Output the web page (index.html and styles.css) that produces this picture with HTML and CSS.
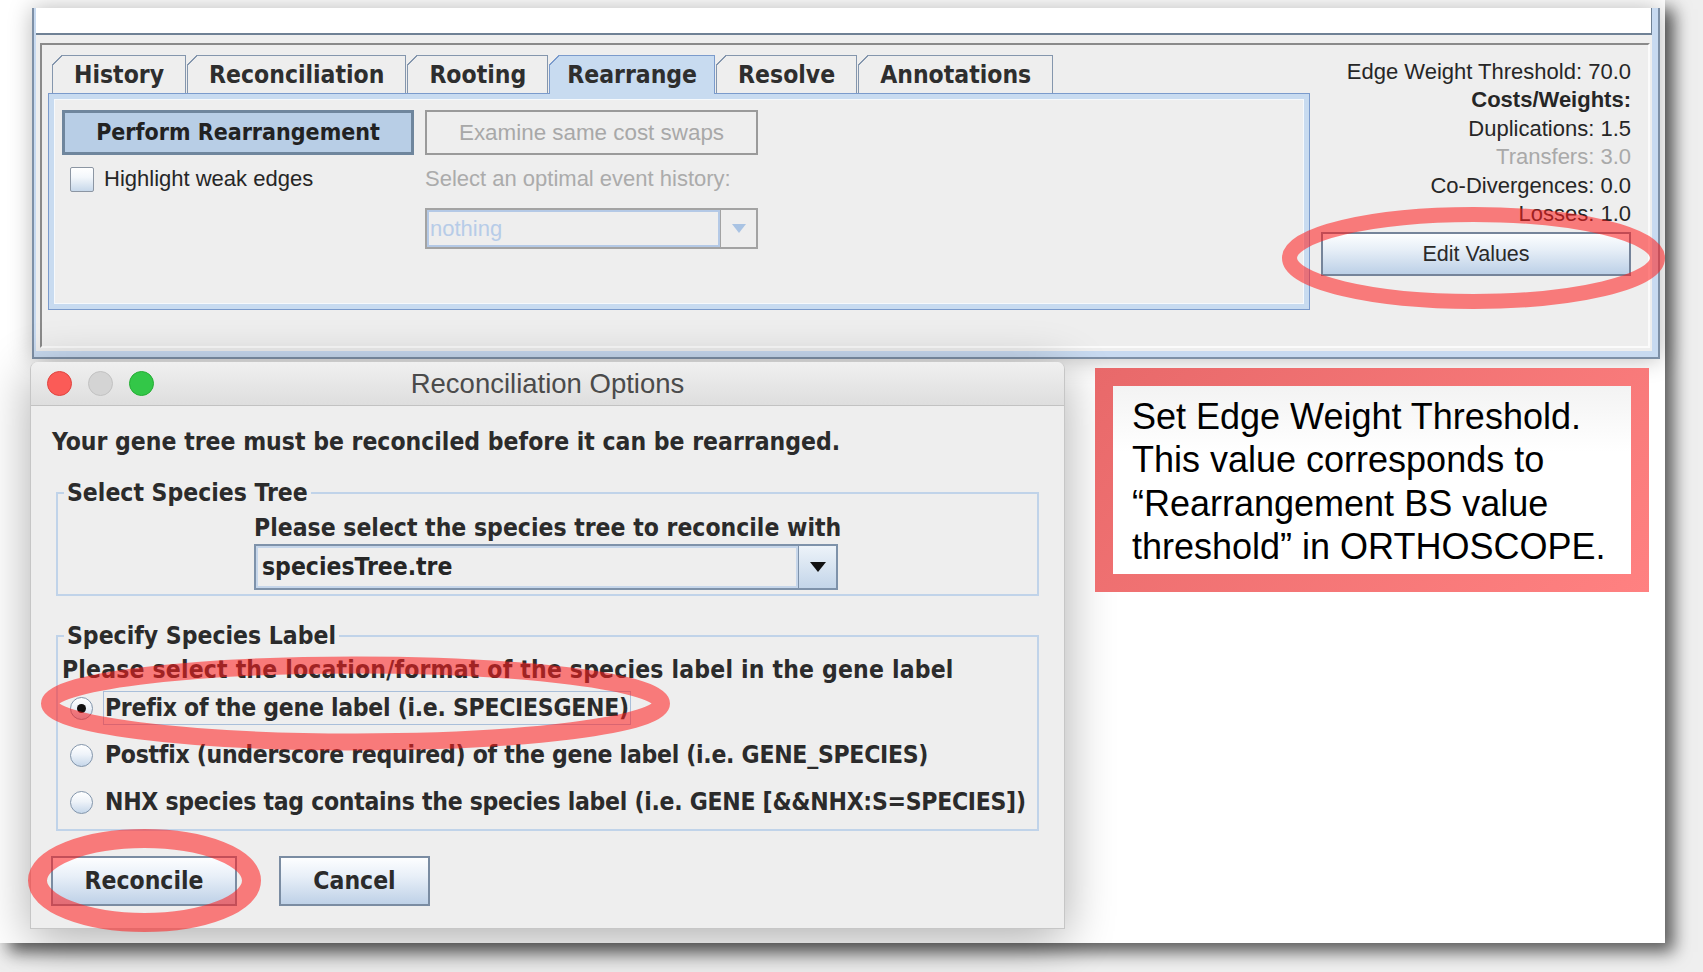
FILE: index.html
```html
<!DOCTYPE html>
<html lang="en">
<head>
<meta charset="utf-8">
<title>Reconciliation Options</title>
<link rel="stylesheet" href="styles.css">
</head>
<body>
<div class="slide">
  <div class="window">
    <div class="win-inner">
      <div class="topstrip"></div>
      <div class="frame">
        <div class="tabbed">
          <div class="tabs">
            <div class="tab">History</div>
            <div class="tab">Reconciliation</div>
            <div class="tab">Rooting</div>
            <div class="tab active">Rearrange</div>
            <div class="tab">Resolve</div>
            <div class="tab">Annotations</div>
          </div>
          <div class="tab-body">
            <div class="rearr">
              <div class="rcol1">
                <div class="btn-primary">Perform Rearrangement</div>
                <div class="check"><span class="checkbox"></span><span>Highlight weak edges</span></div>
              </div>
              <div class="rcol2">
                <div class="btn-disabled">Examine same cost swaps</div>
                <div class="dim-label">Select an optimal event history:</div>
                <div class="combo-dis">
                  <span class="cd-text">nothing</span>
                  <span class="cd-arrow"><svg width="14" height="9" viewBox="0 0 14 9"><path d="M0 0H14L7 9Z" fill="#a9c3e3"/></svg></span>
                </div>
              </div>
            </div>
          </div>
        </div>
        <div class="info">
          <div class="info-line">Edge Weight Threshold: 70.0</div>
          <div class="info-line bold">Costs/Weights:</div>
          <div class="info-line">Duplications: 1.5</div>
          <div class="info-line muted">Transfers: 3.0</div>
          <div class="info-line">Co-Divergences: 0.0</div>
          <div class="info-line">Losses: 1.0</div>
          <div class="btn-edit">Edit Values</div>
        </div>
      </div>
    </div>
  </div>

  <div class="lower">
    <div class="dialog">
      <div class="titlebar">
        <div class="lights">
          <span class="light red"></span>
          <span class="light gray"></span>
          <span class="light green"></span>
        </div>
        <div class="title">Reconciliation Options</div>
        <div></div>
      </div>
      <div class="dlg-body">
        <div class="ui-bold intro">Your gene tree must be reconciled before it can be rearranged.</div>
        <fieldset class="group g1">
          <legend class="ui-bold">Select Species Tree</legend>
          <div class="ui-bold g1-label">Please select the species tree to reconcile with</div>
          <div class="combo">
            <span class="c-text ui-bold">speciesTree.tre</span>
            <span class="c-arrow"><svg width="16" height="10" viewBox="0 0 16 10"><path d="M0 0H16L8 10Z" fill="#111"/></svg></span>
          </div>
        </fieldset>
        <fieldset class="group g2">
          <legend class="ui-bold">Specify Species Label</legend>
          <div class="ui-bold g2-label">Please select the location/format of the species label in the gene label</div>
          <div class="radio-row first"><span class="radio on"></span><span class="ui-bold r-label focus">Prefix of the gene label (i.e. SPECIESGENE)</span></div>
          <div class="radio-row"><span class="radio"></span><span class="ui-bold r-label">Postfix (underscore required) of the gene label (i.e. GENE_SPECIES)</span></div>
          <div class="radio-row"><span class="radio"></span><span class="ui-bold r-label">NHX species tag contains the species label (i.e. GENE [&amp;&amp;NHX:S=SPECIES])</span></div>
        </fieldset>
        <div class="actions">
          <div class="btn-dlg reconcile ui-bold">Reconcile</div>
          <div class="btn-dlg cancel ui-bold">Cancel</div>
        </div>
      </div>
    </div>

    <div class="note">
      <div class="note-inner">Set Edge Weight Threshold.<br>This value corresponds to<br>“Rearrangement BS value<br>threshold” in ORTHOSCOPE.</div>
    </div>
  </div>

  <svg class="marks" width="1665" height="943" viewBox="0 0 1665 943">
    <g fill="none" stroke="rgb(255,30,30)" stroke-opacity="0.56">
      <ellipse cx="1473.5" cy="258" rx="184" ry="43.5" stroke-width="15"/>
      <ellipse cx="355.5" cy="703.5" rx="306" ry="38.5" stroke-width="17"/>
      <ellipse cx="144.5" cy="880.5" rx="107" ry="42" stroke-width="19"/>
    </g>
  </svg>
</div>
</body>
</html>
```

FILE: styles.css
```css
* { box-sizing: border-box; }

html, body {
  margin: 0;
  padding: 0;
}

body {
  width: 1703px;
  height: 972px;
  overflow: hidden;
  background: #efefef;
  font-family: "Liberation Sans", Arial, sans-serif;
}

.slide {
  position: relative;
  width: 1665px;
  height: 943px;
  padding-top: 8px;
  background: #fff;
  box-shadow: 9px 9px 16px rgba(0, 0, 0, 0.62);
}

.ui-bold {
  font-family: "DejaVu Sans Condensed", "DejaVu Sans", sans-serif;
  font-weight: bold;
  font-size: 24.5px;
  line-height: 26px;
  color: #2b2b2b;
}

/* ---------- main window ---------- */
.window {
  margin-left: 32px;
  width: 1628px;
  height: 351px;
  border: 2px solid #7e90a6;
  border-top: none;
  padding: 0 6px 6px 2px;
  background: #c8daf0;
  box-shadow: 0 0 22px rgba(0, 0, 0, 0.28);
}

.win-inner {
  height: 100%;
  background: #eeeeee;
  display: flex;
  flex-direction: column;
}

.topstrip {
  height: 27px;
  flex: none;
  background: #fff;
  border-bottom: 2px solid #6f8195;
  border-right: 1px solid #6f8195;
}

.frame {
  margin: 8px 2px 0 4px;
  height: 305px;
  border: 2px solid;
  border-color: #8a8a8a #fbfbfb #fbfbfb #8a8a8a;
  display: flex;
  padding: 10px 17px 0 6px;
}

.tabbed {
  width: 1262px;
  flex: none;
}

.tabs {
  display: flex;
  align-items: flex-start;
  gap: 1px;
  padding-left: 4px;
  height: 38px;
}

.tab {
  position: relative;
  height: 38px;
  padding: 0 21px;
  border: 1px solid #8496ad;
  border-bottom: none;
  background: #eeeeee;
  font-family: "DejaVu Sans Condensed", "DejaVu Sans", sans-serif;
  font-weight: bold;
  font-size: 24.5px;
  line-height: 37px;
  color: #2e2e2e;
  white-space: nowrap;
}

.tab::before {
  content: "";
  position: absolute;
  left: -1px;
  top: -1px;
  width: 11px;
  height: 11px;
  background: linear-gradient(135deg, #eeeeee calc(50% - 1px), #8496ad calc(50% - 1px), #8496ad calc(50% + 0.6px), transparent calc(50% + 0.6px));
}

.tab.active {
  background: #c8dbf0;
  border-color: #7b9bcc;
  height: 39px;
  margin-bottom: -1px;
  padding: 0 17px;
  z-index: 1;
}

.tab.active::before {
  background: linear-gradient(135deg, #eeeeee calc(50% - 1px), #7b9bcc calc(50% - 1px), #7b9bcc calc(50% + 0.6px), transparent calc(50% + 0.6px));
}

.tab-body {
  position: relative;
  height: 217px;
  border: 1px solid #7b9bcc;
  box-shadow: inset 0 0 0 5px #c8dbf0, inset 0 0 0 6px #f6f9fc;
  background: #eeeeee;
  padding: 16px 0 0 13px;
}

.rearr {
  display: flex;
  gap: 11px;
}

.rcol1 { width: 352px; }
.rcol2 { width: 333px; }

.btn-primary {
  height: 45px;
  border: 3px solid #6f869d;
  background: #b8cee6;
  text-align: center;
  font-family: "DejaVu Sans Condensed", "DejaVu Sans", sans-serif;
  font-weight: bold;
  font-size: 23px;
  line-height: 39px;
  color: #222;
  white-space: nowrap;
}

.btn-disabled {
  height: 45px;
  border: 2px solid #9a9a9a;
  background: #eeeeee;
  text-align: center;
  font-size: 22.4px;
  line-height: 41px;
  color: #a8a8a8;
}

.check {
  margin-top: 11px;
  display: flex;
  align-items: center;
  gap: 10px;
  padding-left: 8px;
  font-size: 22px;
  line-height: 26px;
  color: #262626;
}

.checkbox {
  width: 24px;
  height: 25px;
  flex: none;
  border: 1px solid #8c96a3;
  border-radius: 2px;
  background: linear-gradient(#ffffff, #f3f7fb 40%, #c7d8ea);
}

.dim-label {
  margin-top: 11px;
  font-size: 22px;
  line-height: 26px;
  color: #ababab;
  white-space: nowrap;
}

.combo-dis {
  margin-top: 16px;
  height: 41px;
  display: flex;
  border: 2px solid #a3a3a3;
}

.cd-text {
  flex: 1;
  border: 2px solid #b4c9e6;
  padding-left: 1px;
  font-size: 22px;
  line-height: 33px;
  color: #b7cce8;
}

.cd-arrow {
  width: 36px;
  border-left: 1px solid #a3a3a3;
  display: flex;
  align-items: center;
  justify-content: center;
}

.info {
  flex: 1;
  padding-top: 3px;
  text-align: right;
  font-size: 22px;
  line-height: 28.4px;
  color: #262626;
}

.info-line { white-space: nowrap; }
.info-line.bold { font-weight: bold; }
.info-line.muted { color: #a9a9a9; }

.btn-edit {
  margin: 4px 0 0 auto;
  width: 310px;
  height: 44px;
  border: 2px solid #75849a;
  background: linear-gradient(#fdfeff, #e6eef7 40%, #bcd0e7);
  text-align: center;
  font-size: 21.5px;
  line-height: 40px;
  color: #2a2a2a;
}

/* ---------- lower row ---------- */
.lower {
  display: flex;
  align-items: flex-start;
  margin-top: 3px;
}

.dialog {
  margin-left: 30px;
  width: 1035px;
  height: 567px;
  flex: none;
  background: #eeeeee;
  border: 1px solid #c6c6c6;
  border-top: none;
  border-radius: 7px 7px 0 0;
  box-shadow: 0 10px 50px rgba(0, 0, 0, 0.33);
  display: flex;
  flex-direction: column;
}

.titlebar {
  height: 44px;
  flex: none;
  display: grid;
  grid-template-columns: 1fr auto 1fr;
  align-items: center;
  border-bottom: 1px solid #c2c2c2;
  border-radius: 7px 7px 0 0;
  background: linear-gradient(#f0f0f0, #dedede);
}

.lights {
  display: flex;
  gap: 16px;
  padding-left: 16px;
}

.light {
  width: 25px;
  height: 25px;
  border-radius: 50%;
}

.light.red { background: #fb5b57; border: 1px solid #e0443f; }
.light.gray { background: #d4d4d4; border: 1px solid #c2c2c2; }
.light.green { background: #33c748; border: 1px solid #25ad34; }

.title {
  font-size: 27.5px;
  color: #4b4b4b;
  padding-top: 1px;
}

.dlg-body {
  padding-top: 23px;
}

.intro {
  margin-left: 21px;
  white-space: nowrap;
}

.group {
  margin: 25px 25px 0 25px;
  padding: 0 0 4px 0;
  border: 2px solid #c0d3e9;
  min-width: 0;
}

.group legend {
  margin-left: 6px;
  padding: 0 3px;
}

.g1-label {
  margin: 9px 0 0 196px;
  white-space: nowrap;
}

.combo {
  margin: 3px 0 0 196px;
  width: 584px;
  height: 46px;
  display: flex;
  border: 2px solid #7e92aa;
}

.c-text {
  flex: 1;
  border: 2px solid #c6d6ea;
  padding-left: 4px;
  line-height: 38px;
  color: #262626;
}

.c-arrow {
  width: 38px;
  border-left: 1px solid #7e92aa;
  background: linear-gradient(#edf3f9, #c3d5e9);
  display: flex;
  align-items: center;
  justify-content: center;
}

.g2 {
  margin-top: 27px;
  padding-bottom: 10px;
}

.g2-label {
  margin: 8px 0 0 4px;
  white-space: nowrap;
  letter-spacing: 0.18px;
}

.radio-row {
  height: 34px;
  margin-top: 13px;
  display: flex;
  align-items: center;
  padding-left: 12px;
  gap: 10px;
}

.radio-row.first { margin-top: 8px; }

.radio {
  width: 23px;
  height: 23px;
  flex: none;
  border-radius: 50%;
  border: 1px solid #8295ab;
  background: linear-gradient(#ffffff, #eef3f9 45%, #c6d7ea);
  display: flex;
  align-items: center;
  justify-content: center;
}

.radio.on::after {
  content: "";
  width: 9px;
  height: 9px;
  border-radius: 50%;
  background: #111;
}

.r-label {
  border: 1px solid transparent;
  padding: 3px 1px;
  white-space: nowrap;
  letter-spacing: -0.28px;
}

.r-label.focus {
  border-color: #a9bfda;
}

.actions {
  display: flex;
  gap: 42px;
  margin: 25px 0 0 20px;
}

.btn-dlg {
  height: 50px;
  border: 2px solid #7a8ca2;
  background: linear-gradient(#fdfeff, #e8eff8 40%, #bed1e7);
  text-align: center;
  line-height: 46px;
}

.btn-dlg.reconcile { width: 186px; }
.btn-dlg.cancel { width: 151px; }

/* ---------- annotation note ---------- */
.note {
  margin: 6px 0 0 30px;
  width: 554px;
  height: 224px;
  padding: 18px;
  background: linear-gradient(135deg, #e8696a, #ff8181);
}

.note-inner {
  height: 100%;
  padding: 9px 0 0 19px;
  background: linear-gradient(#f3f3f3, #ffffff 35%);
  font-size: 36px;
  line-height: 43.3px;
  color: #000;
  white-space: nowrap;
}

/* ---------- red highlight ellipses (overlay) ---------- */
.marks {
  position: absolute;
  left: 0;
  top: 0;
  pointer-events: none;
}
```
